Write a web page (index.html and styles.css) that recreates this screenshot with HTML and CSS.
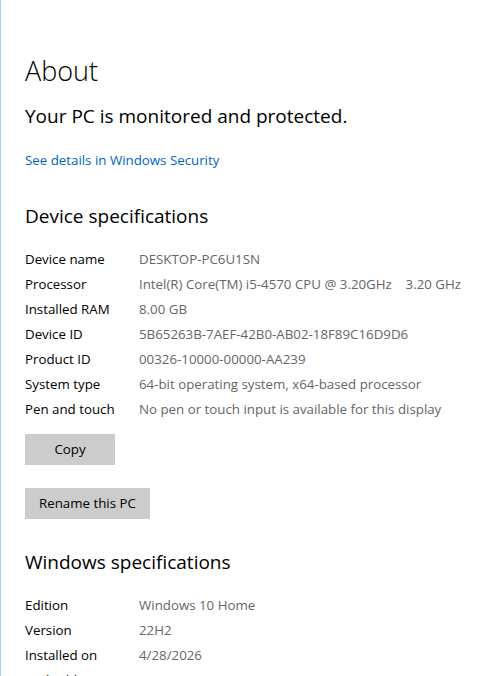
FILE: index.html
```html
<!DOCTYPE html>
<html lang="en">
<head>
<meta charset="utf-8">
<title>About</title>
<link rel="stylesheet" href="styles.css">
</head>
<body>
<div class="page">
  <h1 class="title">About</h1>
  <p class="status">Your PC is monitored and protected.</p>
  <a class="link" href="#">See details in Windows Security</a>

  <h2 class="section">Device specifications</h2>
  <div class="specs">
    <div class="label">Device name</div><div class="value">DESKTOP-PC6U1SN</div>
    <div class="label">Processor</div><div class="value">Intel(R) Core(TM) i5-4570 CPU @ 3.20GHz    3.20 GHz</div>
    <div class="label">Installed RAM</div><div class="value">8.00 GB</div>
    <div class="label">Device ID</div><div class="value">5B65263B-7AEF-42B0-AB02-18F89C16D9D6</div>
    <div class="label">Product ID</div><div class="value">00326-10000-00000-AA239</div>
    <div class="label">System type</div><div class="value">64-bit operating system, x64-based processor</div>
    <div class="label">Pen and touch</div><div class="value">No pen or touch input is available for this display</div>
  </div>
  <div class="actions">
    <button class="btn" type="button">Copy</button>
    <button class="btn" type="button">Rename this PC</button>
  </div>

  <h2 class="section section-win">Windows specifications</h2>
  <div class="specs">
    <div class="label">Edition</div><div class="value">Windows 10 Home</div>
    <div class="label">Version</div><div class="value">22H2</div>
    <div class="label">Installed on</div><div class="value">4/28/2026</div>
    <div class="label">OS build</div><div class="value">19045.3803</div>
  </div>
</div>
</body>
</html>
```

FILE: styles.css
```css
html, body {
  margin: 0;
  padding: 0;
  background: #ffffff;
}
body {
  font-family: "Open Sans", "Noto Sans", "Liberation Sans", sans-serif;
  color: #000000;
  overflow: hidden;
  height: 676px;
}
.page {
  border-left: 1px solid #9fd7f3;
  padding-left: 24px;
  padding-top: 51px;
  height: 100%;
  box-sizing: border-box;
}
.title {
  margin: 0;
  font-size: 27px;
  font-weight: 300;
  line-height: 40px;
}
.status {
  margin: 11px 0 0;
  font-size: 19px;
  font-weight: 400;
  line-height: 28px;
}
.link {
  display: block;
  margin-top: 20px;
  font-size: 13.3px;
  line-height: 20px;
  color: #0067c0;
  text-decoration: none;
}
.section {
  margin: 32px 0 0;
  font-size: 19px;
  font-weight: 400;
  line-height: 28px;
}
.section-win {
  margin-top: 29px;
}
.specs {
  display: grid;
  grid-template-columns: 114px max-content;
  grid-auto-rows: 25px;
  margin-top: 17px;
  font-size: 13.3px;
  line-height: 25px;
  white-space: pre;
}
.label {
  color: #000000;
}
.value {
  color: #666666;
}
.actions {
  display: flex;
  flex-direction: column;
  align-items: flex-start;
  gap: 23px;
  margin-top: 12px;
}
.btn {
  height: 31px;
  min-width: 90px;
  padding: 0 14px;
  border: none;
  background: #cccccc;
  color: #000000;
  font-family: inherit;
  font-size: 13.3px;
  line-height: 31px;
}
```
